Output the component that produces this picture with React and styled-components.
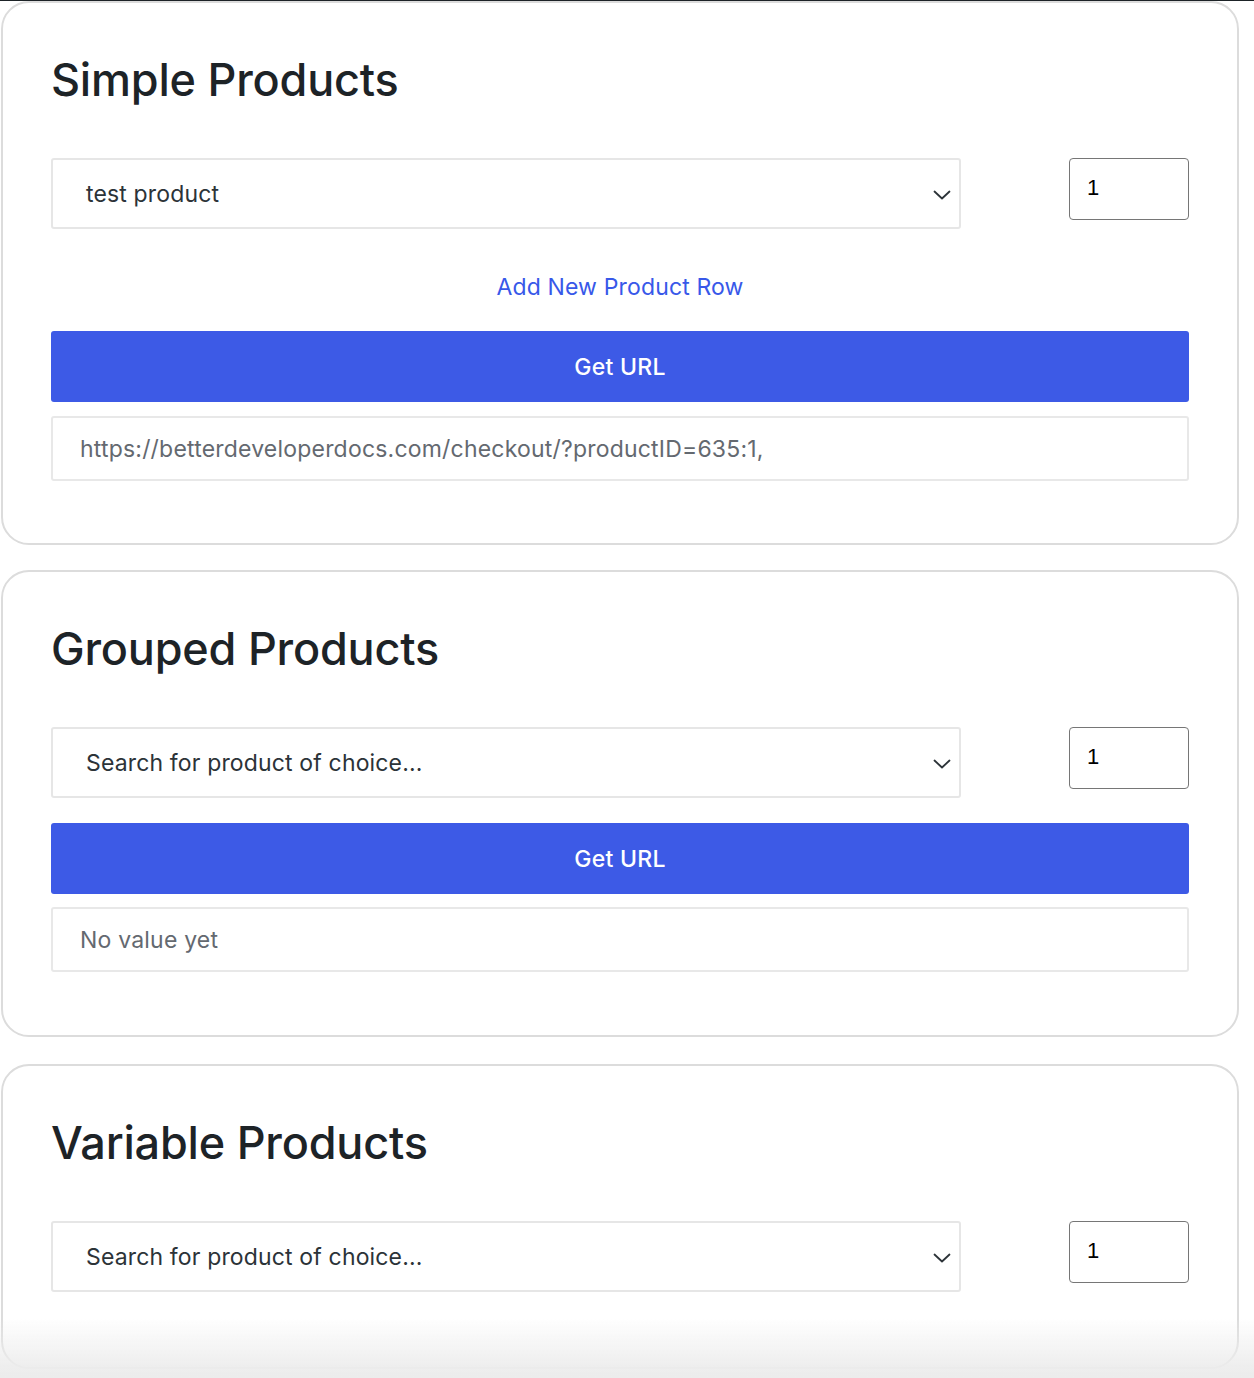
import React from "react";
import styled, { createGlobalStyle } from "styled-components";

const Global = createGlobalStyle`
  html, body { margin: 0; padding: 0; background: #ffffff; }
  body { font-family: Inter, "Noto Sans", sans-serif; color: #1d2327; }
  * { box-sizing: border-box; }
`;

const Page = styled.div`
  border-top: 1px solid #1d2327;
  padding: 0 15px 0 1px;
  min-height: 1378px;
`;

const Card = styled.section`
  border: 2px solid #dcdcdc;
  border-radius: 28px;
  background: #fff;
  padding: 50px 48px ${(p) => p.$pb}px 48px;
  margin-top: ${(p) => p.$mt || 0}px;
`;

const Title = styled.h2`
  margin: 0 0 51px 0;
  font-size: 45px;
  line-height: 54px;
  font-weight: 500;
  letter-spacing: -0.2px;
  color: #1d2327;
`;

const Row = styled.div`
  display: flex;
  align-items: flex-start;
  justify-content: space-between;
`;

const Select = styled.div`
  position: relative;
  width: 910px;
  height: 71px;
  border: 2px solid #e6e6e6;
  border-radius: 3px;
  display: flex;
  align-items: center;
  padding-left: 33px;
  font-size: 23px;
  letter-spacing: 0.15px;
  color: #2c3338;
`;

const Chevron = styled.svg`
  position: absolute;
  right: 8px;
  top: 50%;
  margin-top: -4px;
  width: 18px;
  height: 10px;
`;

const Qty = styled.div`
  width: 120px;
  height: 62px;
  border: 1px solid #767676;
  border-radius: 4px;
  display: flex;
  align-items: center;
  padding: 0 0 2px 17px;
  font-family: "Liberation Sans", Arial, sans-serif;
  font-size: 22px;
  color: #000;
`;

const LinkRow = styled.div`
  margin-top: 36px;
  height: 44px;
  display: flex;
  align-items: center;
  justify-content: center;
`;

const AddLink = styled.a`
  color: #3858e9;
  font-size: 23px;
  letter-spacing: 0.15px;
  text-decoration: none;
  cursor: pointer;
`;

const Button = styled.button`
  display: flex;
  width: 100%;
  height: 71px;
  margin-top: ${(p) => p.$mt}px;
  border: none;
  border-radius: 3px;
  background: #3d5ae6;
  color: #fff;
  font-family: Inter, "Noto Sans", sans-serif;
  font-size: 23px;
  font-weight: 500;
  letter-spacing: 0.3px;
  align-items: center;
  justify-content: center;
  cursor: pointer;
`;

const Output = styled.div`
  margin-top: ${(p) => p.$mt}px;
  height: 65px;
  border: 2px solid #e8e8e8;
  border-radius: 3px;
  display: flex;
  align-items: center;
  padding-left: 27px;
  font-size: 23px;
  letter-spacing: 0.2px;
  color: #646970;
`;

const Fade = styled.div`
  position: fixed;
  left: 0;
  right: 0;
  bottom: 0;
  height: 60px;
  pointer-events: none;
  background: linear-gradient(rgba(236, 236, 236, 0), rgba(236, 236, 236, 0.9) 80%, #ececec);
`;

const ProductRow = ({ value }) => (
  <Row>
    <Select>
      {value}
      <Chevron viewBox="0 0 18 10" fill="none">
        <path d="M1.5 1.5 L9 8.5 L16.5 1.5" stroke="#2c3338" strokeWidth="1.8" strokeLinecap="round" strokeLinejoin="round" />
      </Chevron>
    </Select>
    <Qty>1</Qty>
  </Row>
);

export default function App() {
  return (
    <>
      <Global />
      <Page>
        <Card $pb={62}>
          <Title>Simple Products</Title>
          <ProductRow value="test product" />
          <LinkRow>
            <AddLink>Add New Product Row</AddLink>
          </LinkRow>
          <Button $mt={22}>Get URL</Button>
          <Output $mt={14}>https://betterdeveloperdocs.com/checkout/?productID=635:1,</Output>
        </Card>
        <Card $mt={25} $pb={63}>
          <Title>Grouped Products</Title>
          <ProductRow value="Search for product of choice..." />
          <Button $mt={25}>Get URL</Button>
          <Output $mt={13}>No value yet</Output>
        </Card>
        <Card $mt={27} $pb={75}>
          <Title>Variable Products</Title>
          <ProductRow value="Search for product of choice..." />
        </Card>
      </Page>
      <Fade />
    </>
  );
}
